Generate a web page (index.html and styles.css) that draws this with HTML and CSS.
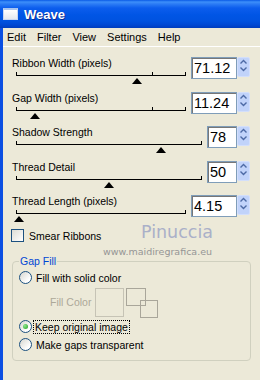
FILE: index.html
```html
<!DOCTYPE html>
<html lang="en">
<head>
    <meta charset="UTF-8">
    <title>Weave</title>
    <link rel="stylesheet" href="styles.css">
</head>
<body>
    <div class="window">
        <div class="titlebar">
            <span class="app-icon"></span>
            <span class="title">Weave</span>
        </div>
        <div class="frame">
            <div class="menubar">
                <span>Edit</span>
                <span>Filter</span>
                <span>View</span>
                <span>Settings</span>
                <span>Help</span>
            </div>

            <div class="client">
                <div class="param">
                    <div class="slider">
                        <div class="label">Ribbon Width (pixels)</div>
                        <div class="track">
                            <i class="tick start"></i>
                            <i class="tick" style="left: 80%"></i>
                            <i class="tick end"></i>
                            <span class="thumb" style="left: 71.12%"></span>
                        </div>
                    </div>
                    <div class="num">71.12</div>
                    <svg class="spin" width="13" height="20" viewBox="0 0 13 20"><rect x="0.5" y="0.5" width="12" height="19" rx="1.5" fill="#c1d3fa" stroke="#d3dffb"/><path d="M3.5 6.5 L6.5 3.5 L9.5 6.5" fill="none" stroke="#4d6aa5" stroke-width="1.4"/><path d="M3.5 10.5 L6.5 13.5 L9.5 10.5" fill="none" stroke="#4d6aa5" stroke-width="1.4"/></svg>
                </div>

                <div class="param">
                    <div class="slider">
                        <div class="label">Gap Width (pixels)</div>
                        <div class="track">
                            <i class="tick start"></i>
                            <i class="tick" style="left: 80%"></i>
                            <i class="tick end"></i>
                            <span class="thumb" style="left: 11.24%"></span>
                        </div>
                    </div>
                    <div class="num">11.24</div>
                    <svg class="spin" width="13" height="20" viewBox="0 0 13 20"><rect x="0.5" y="0.5" width="12" height="19" rx="1.5" fill="#c1d3fa" stroke="#d3dffb"/><path d="M3.5 6.5 L6.5 3.5 L9.5 6.5" fill="none" stroke="#4d6aa5" stroke-width="1.4"/><path d="M3.5 10.5 L6.5 13.5 L9.5 10.5" fill="none" stroke="#4d6aa5" stroke-width="1.4"/></svg>
                </div>

                <div class="param">
                    <div class="slider">
                        <div class="label">Shadow Strength</div>
                        <div class="track">
                            <i class="tick start"></i>
                            <i class="tick end"></i>
                            <span class="thumb" style="left: 78%"></span>
                        </div>
                    </div>
                    <div class="num short">78</div>
                    <svg class="spin" width="13" height="20" viewBox="0 0 13 20"><rect x="0.5" y="0.5" width="12" height="19" rx="1.5" fill="#c1d3fa" stroke="#d3dffb"/><path d="M3.5 6.5 L6.5 3.5 L9.5 6.5" fill="none" stroke="#4d6aa5" stroke-width="1.4"/><path d="M3.5 10.5 L6.5 13.5 L9.5 10.5" fill="none" stroke="#4d6aa5" stroke-width="1.4"/></svg>
                </div>

                <div class="param">
                    <div class="slider">
                        <div class="label">Thread Detail</div>
                        <div class="track">
                            <i class="tick start"></i>
                            <i class="tick end"></i>
                            <span class="thumb" style="left: 50%"></span>
                        </div>
                    </div>
                    <div class="num short">50</div>
                    <svg class="spin" width="13" height="20" viewBox="0 0 13 20"><rect x="0.5" y="0.5" width="12" height="19" rx="1.5" fill="#c1d3fa" stroke="#d3dffb"/><path d="M3.5 6.5 L6.5 3.5 L9.5 6.5" fill="none" stroke="#4d6aa5" stroke-width="1.4"/><path d="M3.5 10.5 L6.5 13.5 L9.5 10.5" fill="none" stroke="#4d6aa5" stroke-width="1.4"/></svg>
                </div>

                <div class="param">
                    <div class="slider">
                        <div class="label">Thread Length (pixels)</div>
                        <div class="track">
                            <i class="tick start"></i>
                            <i class="tick end"></i>
                            <span class="thumb" style="left: 2%"></span>
                        </div>
                    </div>
                    <div class="num">4.15</div>
                    <svg class="spin" width="13" height="20" viewBox="0 0 13 20"><rect x="0.5" y="0.5" width="12" height="19" rx="1.5" fill="#c1d3fa" stroke="#d3dffb"/><path d="M3.5 6.5 L6.5 3.5 L9.5 6.5" fill="none" stroke="#4d6aa5" stroke-width="1.4"/><path d="M3.5 10.5 L6.5 13.5 L9.5 10.5" fill="none" stroke="#4d6aa5" stroke-width="1.4"/></svg>
                </div>

                <div class="check-row">
                    <span class="checkbox"></span>
                    <span>Smear Ribbons</span>
                </div>

                <fieldset class="group">
                    <legend>Gap Fill</legend>
                    <div class="option">
                        <span class="radio"></span>
                        <span>Fill with solid color</span>
                    </div>
                    <div class="fill-row">
                        <span class="fill-label">Fill Color</span>
                        <span class="swatch"></span>
                        <svg width="34" height="31" viewBox="0 0 34 31"><rect x="2.5" y="0.5" width="19" height="17" fill="none" stroke="#a9a69a"/><rect x="16.5" y="12.5" width="17" height="17" fill="none" stroke="#a9a69a"/></svg>
                    </div>
                    <div class="option">
                        <span class="radio checked"></span>
                        <span class="focused">Keep original image</span>
                    </div>
                    <div class="option">
                        <span class="radio"></span>
                        <span>Make gaps transparent</span>
                    </div>
                </fieldset>
            </div>
        </div>

        <div class="wm-name">Pinuccia</div>
        <div class="wm-url">www.maidiregrafica.eu</div>
    </div>
</body>
</html>
```

FILE: styles.css
```css
body {
    margin: 0;
    background: #ece9d8;
    font-family: Tahoma, "Liberation Sans", Arial, sans-serif;
    font-size: 10.5px;
    color: #000;
}

.window {
    position: relative;
    width: 260px;
    height: 380px;
    overflow: hidden;
    background: #ece9d8;
}

.titlebar {
    height: 28px;
    display: flex;
    align-items: center;
    padding-left: 3px;
    box-sizing: border-box;
    background: linear-gradient(to bottom, #0a5ae6 0, #3d8ffa 2px, #2b7bf5 4px, #0c5ded 8px, #0055e5 15px, #0052e0 21px, #0048d3 25px, #003dbd 28px);
}

.app-icon {
    width: 13px;
    height: 9px;
    margin-top: -1px;
    margin-right: 6px;
    background: linear-gradient(#ffffff, #e4e8ef);
    border: 1px solid #c8d6f0;
    border-top: 2px solid #a9c4ef;
}

.title {
    font-family: "Liberation Sans", Arial, sans-serif;
    font-weight: bold;
    font-size: 13px;
    color: #fff;
    text-shadow: 1px 1px 0 #0b2c94;
}

.frame {
    height: 352px;
    border-left: 3px solid #0b4fe2;
}

.menubar {
    height: 18px;
    display: flex;
    align-items: center;
    gap: 11px;
    padding-left: 4px;
    font-size: 11px;
    border-bottom: 1px solid #fff;
}

.client {
    padding-top: 10px;
}

.param {
    display: flex;
    align-items: flex-start;
    height: 34.5px;
    padding: 0 10px 0 9px;
}

.slider {
    flex: 1;
}

.label {
    height: 13px;
    line-height: 13px;
    white-space: nowrap;
}

.track {
    position: relative;
    height: 1px;
    margin: 5px 5px 0 4px;
    background: #000;
}

.tick {
    position: absolute;
    top: -3px;
    width: 1px;
    height: 3px;
    background: #000;
}

.tick.start {
    left: 0;
}

.tick.end {
    right: 0;
}

.thumb {
    position: absolute;
    top: 3px;
    width: 0;
    height: 0;
    margin-left: -5px;
    border-left: 5px solid transparent;
    border-right: 5px solid transparent;
    border-bottom: 6px solid #000;
}

.num {
    width: 46px;
    height: 22px;
    box-sizing: border-box;
    border: 1px solid #7f9db9;
    box-shadow: inset 1px 1px 0 #777;
    background: #fff;
    padding-left: 2px;
    font-size: 14.5px;
    line-height: 21px;
    white-space: nowrap;
}

.num.short {
    width: 30px;
}

.spin {
    display: block;
}

.check-row {
    display: flex;
    align-items: center;
    gap: 5px;
    height: 14px;
    margin-top: -1px;
    padding-left: 8px;
}

.checkbox {
    width: 11px;
    height: 11px;
    border: 1px solid #1c5180;
    background: linear-gradient(135deg, #dcdcd5, #fff);
}

.group {
    margin: 12px 9px 0 9px;
    padding: 2px 6px 5px 6px;
    border: 1px solid #d0d0bf;
    border-radius: 4px;
}

.group legend {
    padding: 0 1px;
    color: #0046d5;
    line-height: 13px;
}

.option {
    display: flex;
    align-items: center;
    gap: 4px;
    height: 16px;
    margin-bottom: 2px;
}

.radio {
    position: relative;
    width: 11px;
    height: 11px;
    border: 1px solid #1c5180;
    border-radius: 50%;
    background: linear-gradient(135deg, #d6d6cf, #fff 75%);
}

.radio.checked::after {
    content: "";
    position: absolute;
    left: 3px;
    top: 3px;
    width: 5px;
    height: 5px;
    border-radius: 50%;
    background: radial-gradient(circle at 35% 35%, #8ee68e, #21a121);
}

.focused {
    outline: 1px dotted #000;
    padding: 0 1px;
    margin-left: -2px;
}

.fill-row {
    display: flex;
    align-items: flex-start;
    height: 31px;
    padding-left: 31px;
}

.fill-label {
    width: 45px;
    margin-top: 8px;
    color: #aca899;
}

.swatch {
    width: 27px;
    height: 27px;
    border: 1px solid #c6c3b5;
}

.wm-name {
    position: absolute;
    left: 141px;
    top: 222px;
    font-family: "DejaVu Sans", sans-serif;
    font-size: 17.5px;
    color: #aab0c8;
}

.wm-url {
    position: absolute;
    left: 103px;
    top: 246px;
    font-family: "DejaVu Sans", sans-serif;
    font-size: 9.5px;
    color: #959595;
}
```
